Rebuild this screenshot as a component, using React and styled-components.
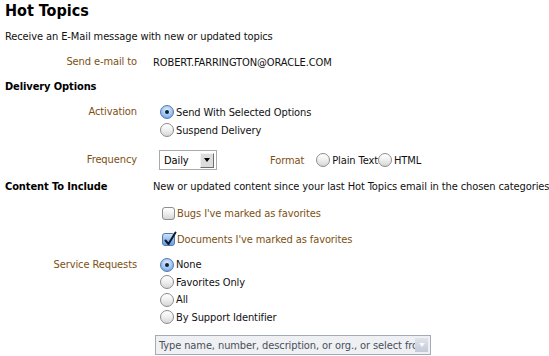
import React from "react";
import styled, { createGlobalStyle } from "styled-components";

const GlobalStyle = createGlobalStyle`
  html, body {
    margin: 0;
    padding: 0;
    background: #ffffff;
  }
  body {
    font-family: "DejaVu Sans Condensed", "DejaVu Sans", sans-serif;
    font-size: 11px;
    letter-spacing: -0.1px;
    color: #111;
  }
`;

const Page = styled.div`
  width: 549px;
  height: 356px;
  padding: 0 5px;
  box-sizing: border-box;
  display: flex;
  flex-direction: column;
  overflow: hidden;
`;

const Title = styled.h1`
  margin: 0;
  height: 22px;
  line-height: 22px;
  font-size: 16px;
  font-weight: bold;
  letter-spacing: 0;
  color: #000;
`;

const Line = styled.div`
  height: ${(p) => p.h}px;
  display: flex;
  align-items: center;
  white-space: nowrap;
`;

const Heading = styled.div`
  height: ${(p) => p.h}px;
  display: flex;
  align-items: center;
  font-weight: bold;
  color: #000;
  white-space: nowrap;
`;

const Row = styled.div`
  display: grid;
  grid-template-columns: 132px 1fr;
  column-gap: 16px;
  margin-top: ${(p) => p.mt || 0}px;
`;

const Label = styled.div`
  text-align: ${(p) => (p.bold ? "left" : "right")};
  color: ${(p) => (p.bold ? "#000" : "#7d5012")};
  font-weight: ${(p) => (p.bold ? "bold" : "normal")};
  height: ${(p) => p.h || 18}px;
  line-height: ${(p) => p.h || 18}px;
  white-space: nowrap;
`;

const Stack = styled.div`
  display: flex;
  flex-direction: column;
  gap: ${(p) => p.gap || 0}px;
`;

const Option = styled.label`
  display: flex;
  align-items: center;
  height: ${(p) => p.h || 18}px;
  padding-left: ${(p) => p.indent ?? 7}px;
  color: ${(p) => (p.brown ? "#7d5012" : "#111")};
  white-space: nowrap;
`;

const Radio = styled.span`
  width: 14px;
  height: 14px;
  box-sizing: border-box;
  border-radius: 50%;
  border: 1px solid ${(p) => (p.on ? "#4f79b5" : "#8d8d8d")};
  background: ${(p) =>
    p.on
      ? "radial-gradient(circle at 50% 35%, #e4f0fc 0%, #9cc3ef 55%, #5e93d6 100%)"
      : "linear-gradient(#ffffff 0%, #f1f1f1 45%, #d6d6d6 100%)"};
  margin-right: 2px;
  display: inline-flex;
  align-items: center;
  justify-content: center;
  flex: none;
  &::after {
    content: "";
    width: 4px;
    height: 4px;
    border-radius: 50%;
    background: #10203a;
    display: ${(p) => (p.on ? "block" : "none")};
  }
`;

const Check = styled.span`
  width: 13px;
  height: 13px;
  box-sizing: border-box;
  border-radius: 3px;
  border: 1px solid ${(p) => (p.on ? "#4f79b5" : "#8d8d8d")};
  background: ${(p) =>
    p.on
      ? "linear-gradient(#cfe3f8 0%, #8db8ea 60%, #6b9fdc 100%)"
      : "linear-gradient(#ffffff 0%, #f1f1f1 45%, #d6d6d6 100%)"};
  margin-right: 2px;
  position: relative;
  flex: none;
  svg {
    position: absolute;
    left: 0px;
    top: -3px;
  }
`;

const Inline = styled.div`
  display: flex;
  align-items: center;
  height: ${(p) => p.h || 24}px;
`;

const Select = styled.div`
  width: 58px;
  height: 20px;
  box-sizing: border-box;
  border: 1px solid #a9a9a9;
  background: #fff;
  display: flex;
  align-items: center;
  justify-content: space-between;
  padding: 1px 2px 1px 4px;
  margin-left: 6px;
  color: #000;
`;

const ArrowBtn = styled.span`
  width: 14px;
  height: 15px;
  box-sizing: border-box;
  border: 1px solid;
  border-color: #f4f4f4 #6e6e6e #6e6e6e #f4f4f4;
  background: #dcdcdc;
  display: flex;
  align-items: center;
  justify-content: center;
  &::after {
    content: "";
    border-left: 3.5px solid transparent;
    border-right: 3.5px solid transparent;
    border-top: 4px solid #000;
  }
`;

const FormatLabel = styled.span`
  color: #7d5012;
  margin-left: 53px;
  margin-right: 12px;
`;

const Desc = styled.div`
  height: 22px;
  line-height: 22px;
  white-space: nowrap;
  color: #111;
`;

const Combo = styled.div`
  width: 276px;
  height: 20px;
  box-sizing: border-box;
  border: 1px solid #a3abb7;
  background: #eef0f4;
  display: flex;
  align-items: center;
  margin-left: 2px;
  overflow: hidden;
`;

const ComboText = styled.span`
  flex: 1;
  overflow: hidden;
  white-space: nowrap;
  color: #4a4f57;
  padding-left: 3px;
`;

const ComboBtn = styled.span`
  width: 13px;
  height: 14px;
  margin-right: 2px;
  background: linear-gradient(#dfe4ec, #c3cad6);
  display: flex;
  align-items: center;
  justify-content: center;
  flex: none;
  &::after {
    content: "";
    border-left: 3.5px solid transparent;
    border-right: 3.5px solid transparent;
    border-top: 4px solid #f7f9fc;
  }
`;

const CheckMark = () => (
  <svg width="14" height="16" viewBox="0 0 14 16">
    <path
      d="M2.5 9.5 L5.5 13 L12.5 1.5"
      fill="none"
      stroke="#0d1a2c"
      strokeWidth="2"
      strokeLinecap="round"
      strokeLinejoin="round"
    />
  </svg>
);

const RadioOption = ({ on, children, h, indent }) => (
  <Option h={h} indent={indent}>
    <Radio on={on} />
    {children}
  </Option>
);

const CheckOption = ({ on, children, h }) => (
  <Option h={h} brown indent={9}>
    <Check on={on}>{on && <CheckMark />}</Check>
    {children}
  </Option>
);

export default function App() {
  return (
    <>
      <GlobalStyle />
      <Page>
        <Title>Hot Topics</Title>
        <Line h={29}>Receive an E-Mail message with new or updated topics</Line>
        <Row>
          <Label h={22}>Send e-mail to</Label>
          <Line h={22}>ROBERT.FARRINGTON@ORACLE.COM</Line>
        </Row>
        <Heading h={26}>Delivery Options</Heading>
        <Row mt={4}>
          <Label>Activation</Label>
          <Stack>
            <RadioOption on>Send With Selected Options</RadioOption>
            <RadioOption>Suspend Delivery</RadioOption>
          </Stack>
        </Row>
        <Row mt={9}>
          <Label h={24}>Frequency</Label>
          <Inline>
            <Select>
              Daily
              <ArrowBtn />
            </Select>
            <FormatLabel>Format</FormatLabel>
            <RadioOption indent={0}>Plain Text</RadioOption>
            <RadioOption indent={0}>HTML</RadioOption>
          </Inline>
        </Row>
        <Row mt={4}>
          <Label bold h={22}>
            Content To Include
          </Label>
          <Desc>
            New or updated content since your last Hot Topics email in the chosen categories
          </Desc>
        </Row>
        <Row mt={4}>
          <span />
          <Stack gap={4}>
            <CheckOption h={22}>Bugs I've marked as favorites</CheckOption>
            <CheckOption on h={22}>
              Documents I've marked as favorites
            </CheckOption>
          </Stack>
        </Row>
        <Row mt={6}>
          <Label>Service Requests</Label>
          <Stack>
            <RadioOption on h={17.5}>None</RadioOption>
            <RadioOption h={17.5}>Favorites Only</RadioOption>
            <RadioOption h={17.5}>All</RadioOption>
            <RadioOption h={17.5}>By Support Identifier</RadioOption>
          </Stack>
        </Row>
        <Row mt={9}>
          <span />
          <Combo>
            <ComboText>
              Type name, number, description, or org., or select from list
            </ComboText>
            <ComboBtn />
          </Combo>
        </Row>
      </Page>
    </>
  );
}
